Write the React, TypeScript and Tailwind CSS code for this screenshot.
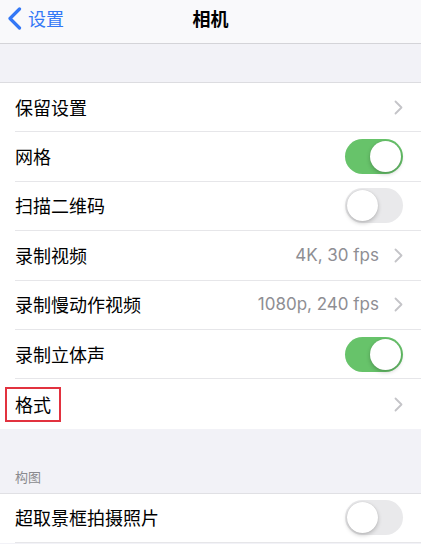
import React from 'react';

const FONT = { fontFamily: '"Noto Sans CJK SC", "Noto Sans", sans-serif' };

const Chevron = () => (
  <svg width="9" height="15" viewBox="0 0 9 15" className="shrink-0">
    <path d="M1.5 1.5 L7.5 7.5 L1.5 13.5" fill="none" stroke="#c4c4c8" strokeWidth="1.8" strokeLinecap="round" strokeLinejoin="round" />
  </svg>
);

const Toggle = ({ on }: { on: boolean }) => (
  <div
    className={`relative w-[58px] h-[35px] rounded-full shrink-0 ${on ? 'bg-[#67c36a]' : 'bg-[#e9e9eb]'}`}
  >
    <div
      className={`absolute top-[2px] w-[31px] h-[31px] rounded-full bg-white shadow-[0_2px_4px_rgba(0,0,0,0.22),0_0_1px_rgba(0,0,0,0.15)] ${on ? 'right-[2px]' : 'left-[2px]'}`}
    ></div>
  </div>
);

type RowProps = {
  label: string;
  value?: string;
  toggle?: boolean;
  chevron?: boolean;
  last?: boolean;
  boxed?: boolean;
};

const Row = ({ label, value, toggle, chevron, last, boxed }: RowProps) => (
  <div className="pl-[15px] bg-white">
    <div className={`h-[49.4px] flex items-center pr-[18px] ${last ? '' : 'border-b border-[#e6e6e9]'}`}>
      {boxed ? (
        <span className="-ml-[10px] px-[8px] h-[35px] flex items-center border-2 border-[#e2323f] text-[18px] text-black">
          {label}
        </span>
      ) : (
        <span className="text-[18px] text-black">{label}</span>
      )}
      <div className="flex-1"></div>
      {value && (
        <span className="text-[17px] text-[#8e8e93] mr-[15px]" style={{ fontFamily: 'Inter, "Noto Sans", sans-serif' }}>
          {value}
        </span>
      )}
      {toggle !== undefined && <Toggle on={toggle} />}
      {chevron && <Chevron />}
    </div>
  </div>
);

export default function App() {
  return (
    <div className="w-[421px] h-[544px] overflow-hidden bg-[#f2f2f7]" style={FONT}>
      {/* Nav bar */}
      <div className="relative h-[44px] pb-[6px] bg-[#f9f9fb] border-b border-[#d4d4d8] flex items-center">
        <div className="flex items-center pl-[7px] gap-[4px] text-[#3478f6]">
          <svg width="15" height="23" viewBox="0 0 15 23">
            <path d="M12.5 2 L3 11.5 L12.5 21" fill="none" stroke="#3478f6" strokeWidth="3.2" strokeLinecap="round" strokeLinejoin="round" />
          </svg>
          <span className="text-[18px] ml-[2px]">设置</span>
        </div>
        <div className="absolute inset-0 pb-[6px] flex items-center justify-center pointer-events-none">
          <span className="text-[18px] font-semibold text-black">相机</span>
        </div>
      </div>

      <div className="h-[39px] border-b border-[#dcdce0]"></div>

      <div className="bg-white">
        <Row label="保留设置" chevron />
        <Row label="网格" toggle={true} />
        <Row label="扫描二维码" toggle={false} />
        <Row label="录制视频" value="4K, 30 fps" chevron />
        <Row label="录制慢动作视频" value="1080p, 240 fps" chevron />
        <Row label="录制立体声" toggle={true} />
        <Row label="格式" chevron last boxed />
      </div>

      <div className="h-[65px] flex items-end pl-[15px] pb-[6px] border-b border-[#e0e0e4]">
        <span className="text-[13px] text-[#8a8a8e]">构图</span>
      </div>

      <div className="bg-white">
        <Row label="超取景框拍摄照片" toggle={false} />
      </div>
    </div>
  );
}
